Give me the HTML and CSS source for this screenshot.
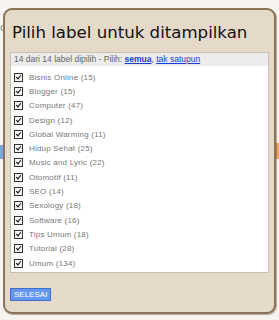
FILE: index.html
```html
<!DOCTYPE html>
<html lang="id">
<head>
    <meta charset="UTF-8">
    <title>Pilih label</title>
    <link rel="stylesheet" href="styles.css">
</head>
<body>
    <div class="backdrop">
        <span class="bg-text">o</span>
        <span class="bg-bar"></span>
        <span class="bg-orange"></span>
    </div>

    <div class="dialog">
        <h1>Pilih label untuk ditampilkan</h1>

        <div class="label-box">
            <div class="label-head">
                14 dari 14 label dipilih - Pilih: <a href="#" class="all">semua</a>, <a href="#">tak satupun</a>
            </div>
            <ul class="label-list">
                <li><span class="check"></span>Bisnis Online (15)</li>
                <li><span class="check"></span>Blogger (15)</li>
                <li><span class="check"></span>Computer (47)</li>
                <li><span class="check"></span>Design (12)</li>
                <li><span class="check"></span>Global Warming (11)</li>
                <li><span class="check"></span>Hidup Sehat (25)</li>
                <li><span class="check"></span>Music and Lyric (22)</li>
                <li><span class="check"></span>Otomotif (11)</li>
                <li><span class="check"></span>SEO (14)</li>
                <li><span class="check"></span>Sexology (18)</li>
                <li><span class="check"></span>Software (16)</li>
                <li><span class="check"></span>Tips Umum (18)</li>
                <li><span class="check"></span>Tutorial (28)</li>
                <li><span class="check"></span>Umum (134)</li>
            </ul>
        </div>

        <button class="done-button">SELESAI</button>
    </div>
</body>
</html>
```

FILE: styles.css
```css
* {
    margin: 0;
    padding: 0;
    box-sizing: border-box;
}

body {
    background: #f7f4ef;
    font-family: "DejaVu Sans", Verdana, sans-serif;
    padding: 8px 3px 6px 3px;
}

.backdrop {
    position: absolute;
    top: 0;
    left: 0;
    width: 279px;
    height: 320px;
    z-index: -1;
}

.bg-text {
    position: absolute;
    left: 0;
    top: 22px;
    font-size: 10px;
    color: #888;
}

.bg-bar {
    position: absolute;
    left: 0;
    top: 145px;
    width: 3px;
    height: 14px;
    background: #7da2e0;
}

.bg-orange {
    position: absolute;
    right: 0;
    top: 143px;
    width: 3px;
    height: 16px;
    background: #f5a45c;
}

.dialog {
    width: 273px;
    height: 306px;
    background: #e5dac9;
    border: 2px solid #8b7357;
    border-radius: 9px;
    box-shadow: 1px 1px 1px rgba(80, 60, 40, 0.4);
    padding: 0 5px;
}

h1 {
    font-size: 16.6px;
    font-weight: normal;
    color: #111;
    padding: 13px 0 0 2px;
    height: 42px;
}

.label-box {
    background: #fff;
    border: 1px solid #c9c1b4;
    height: 221px;
}

.label-head {
    background: #ececec;
    font-family: "Liberation Sans", Arial, sans-serif;
    font-size: 8.5px;
    color: #666;
    padding: 1px 3px 0;
    height: 13px;
    white-space: nowrap;
}

.label-head a,
.label-head a:visited {
    color: #1a3ccc;
}

.label-head a.all {
    font-weight: bold;
}

.label-list {
    list-style: none;
    padding: 4px 0 0 3px;
}

.label-list li {
    display: flex;
    align-items: center;
    height: 14.3px;
    font-family: "Liberation Sans", Arial, sans-serif;
    font-size: 8px;
    letter-spacing: 0.2px;
    color: #777;
}

.check {
    width: 9px;
    height: 9px;
    border: 1px solid #333;
    background: #f4f4f4;
    margin-right: 6px;
    position: relative;
}

.check::after {
    content: '';
    position: absolute;
    left: 2px;
    top: 0;
    width: 2px;
    height: 4px;
    border: solid #111;
    border-width: 0 1.5px 1.5px 0;
    transform: rotate(40deg);
}

.done-button {
    margin-top: 15px;
    background: #6497f2;
    border: 1px solid #3e6fd0;
    color: #fff;
    font-family: "Liberation Sans", Arial, sans-serif;
    font-size: 8px;
    padding: 0 3px;
    height: 13px;
}
```
